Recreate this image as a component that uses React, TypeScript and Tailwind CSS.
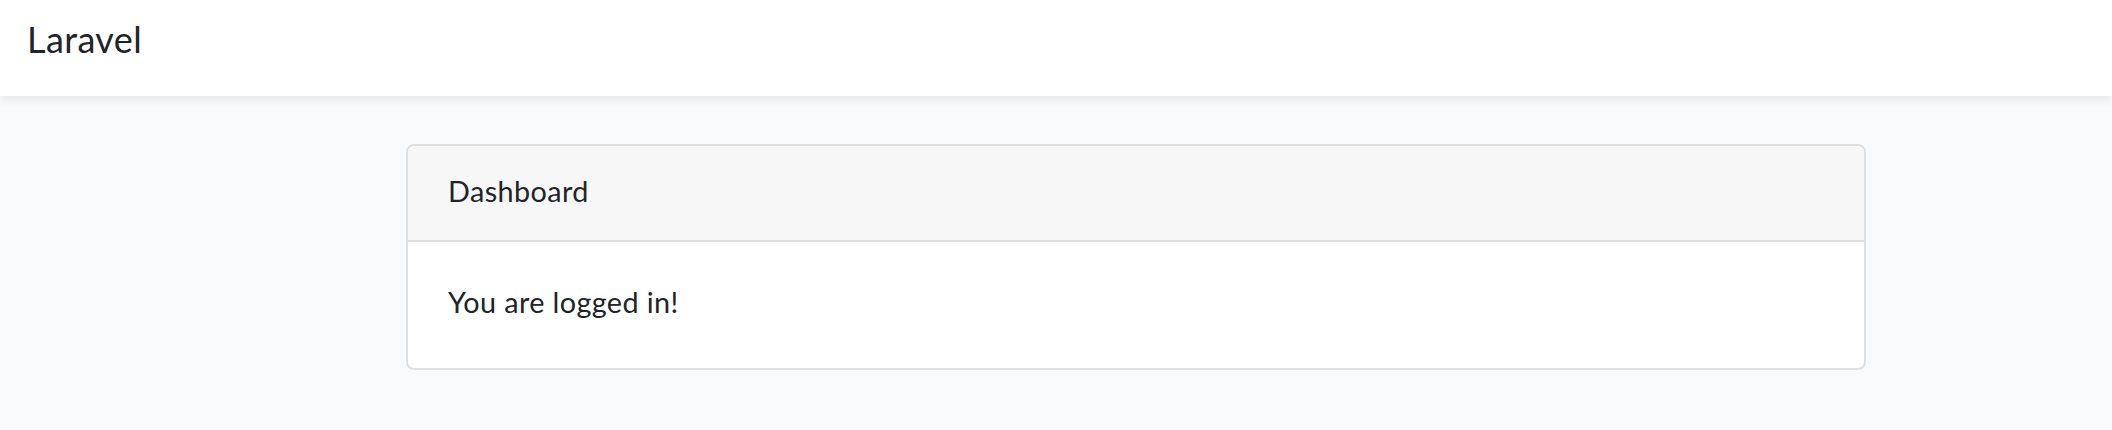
export default function App() {
  return (
    <div className="min-h-[430px] bg-[#f8fafc] text-[#212529] tracking-[0.4px]" style={{ fontFamily: "Lato, 'Noto Sans', sans-serif" }}>
      <nav className="h-[96px] bg-white px-[27px] pt-[18px] shadow-[0_4px_8px_rgba(0,0,0,0.075)] relative">
        <a className="text-[36px] leading-[43px]">Laravel</a>
      </nav>
      <main className="pt-[48px] pl-[406px]">
        <div className="w-[1460px] rounded-[8px] border-2 border-[#dfdfdf] bg-white overflow-hidden">
          <div className="bg-[#f7f7f7] border-b-2 border-[#dfdfdf] px-[40px] pt-[22px] pb-[26px] text-[28.8px] leading-[46px]">
            Dashboard
          </div>
          <div className="px-[40px] pt-[37px] pb-[43px] text-[28.8px] leading-[46px]">
            You are logged in!
          </div>
        </div>
      </main>
    </div>
  );
}
